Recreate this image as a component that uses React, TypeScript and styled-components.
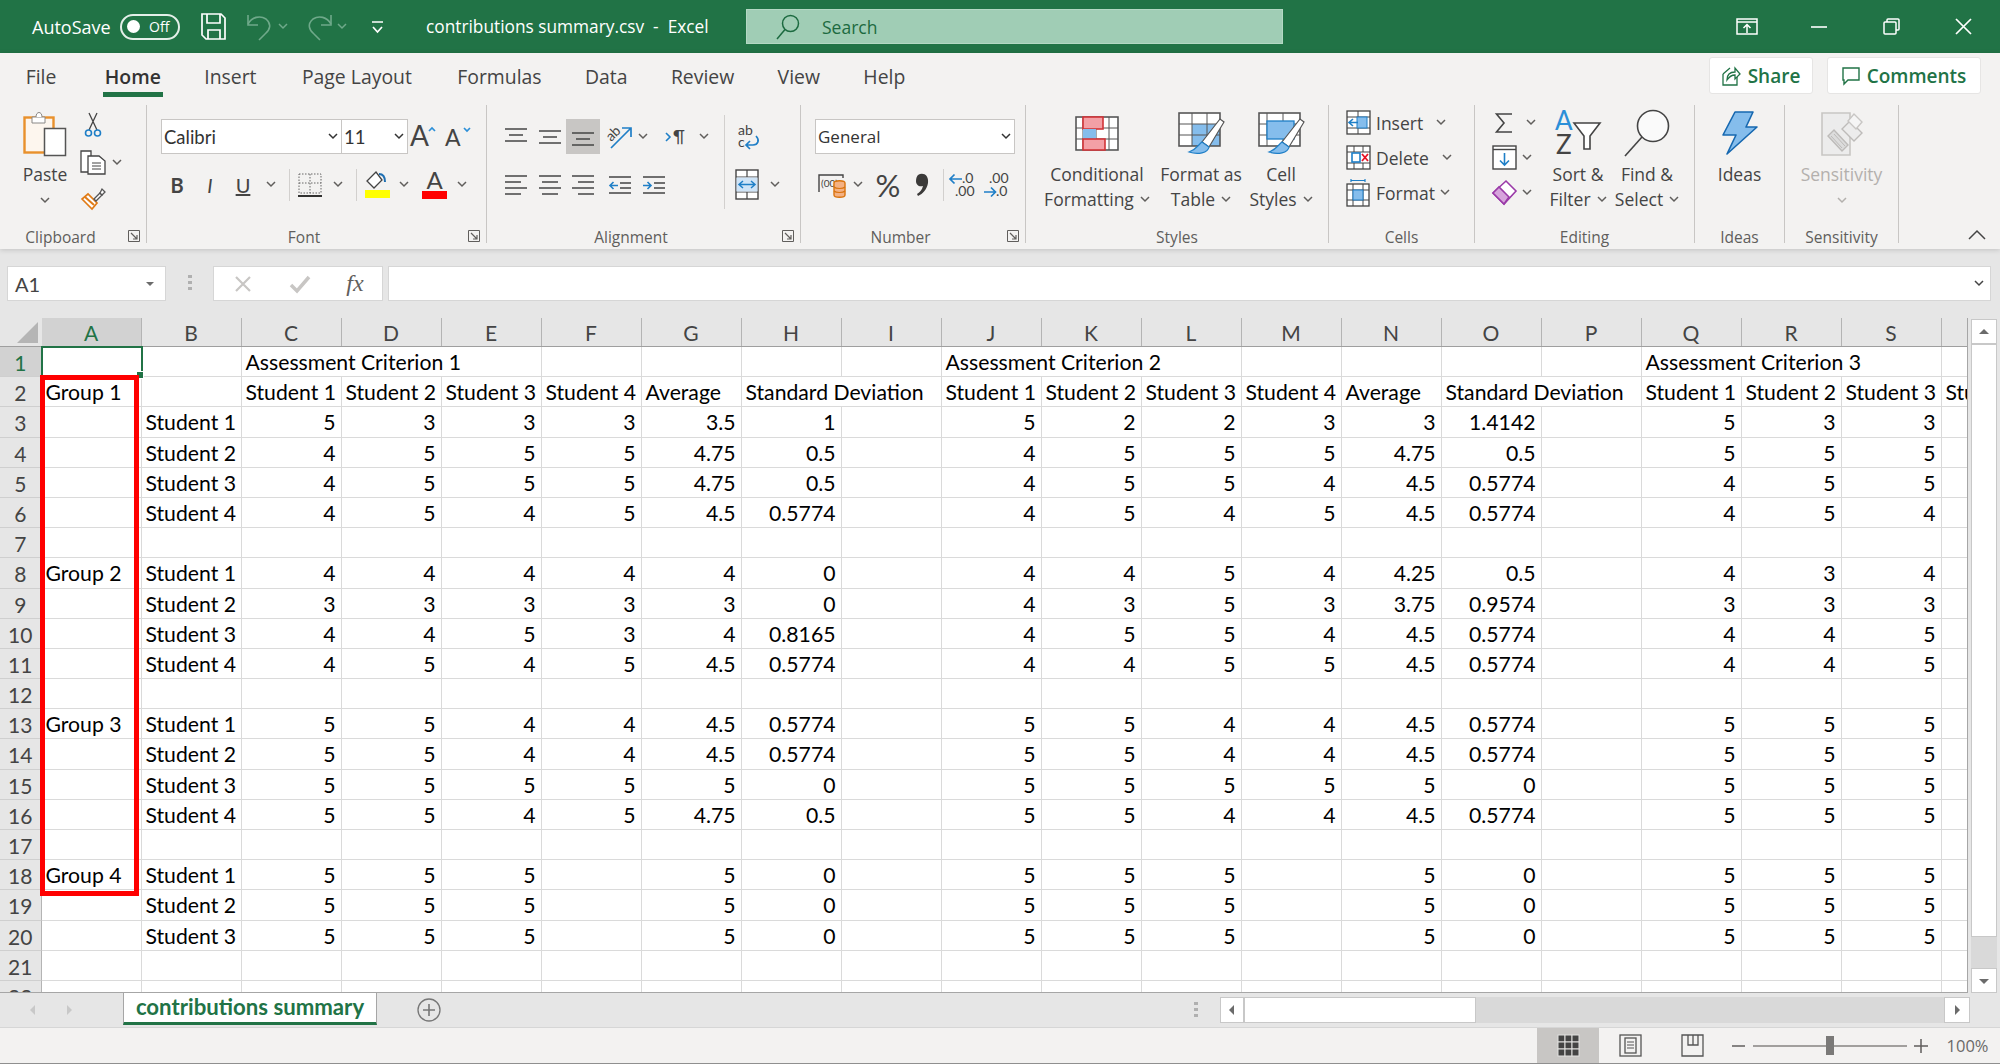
import React from "react";
import styled, { createGlobalStyle } from "styled-components";

const UI = `"Open Sans", "Noto Sans", sans-serif`;
const CELL = `Lato, "Open Sans", sans-serif`;
const GREEN = "#217346";
const INK = "#444444";
const BLUE = "#2b8fd8";
const LIGHTBLUE = "#85bdec";

const GlobalStyle = createGlobalStyle`
  html, body { margin: 0; padding: 0; background: #e6e6e6; }
  * { box-sizing: border-box; }
  svg { overflow: visible; }
`;

const Page = styled.div`
  width: 2000px;
  height: 1064px;
  overflow: hidden;
  display: flex;
  flex-direction: column;
  background: #e6e6e6;
  font-family: ${UI};
  color: #3b3a39;
`;

/* title bar */
const TitleBar = styled.header`
  height: 53px;
  flex: none;
  display: flex;
  align-items: center;
  padding-left: 32px;
  background: ${GREEN};
  color: #fff;
`;
const AutoSave = styled.span`
  width: 88px;
  font-size: 18px;
`;
const Toggle = styled.span`
  width: 60px;
  height: 26px;
  border: 2px solid #e4efe9;
  border-radius: 13px;
  display: flex;
  align-items: center;
  gap: 9px;
  padding-left: 5px;
  font-size: 14px;
  &::before {
    content: "";
    width: 13px;
    height: 13px;
    border-radius: 50%;
    background: #fff;
  }
`;
const Slot = styled.span<{ $w: number; $ml?: number }>`
  width: ${(p) => p.$w}px;
  margin-left: ${(p) => p.$ml || 0}px;
  flex: none;
  display: inline-flex;
  align-items: center;
  justify-content: center;
`;
const FileName = styled.span`
  width: 320px;
  margin-left: 23px;
  font-size: 17.3px;
  white-space: pre;
`;
const SearchBox = styled.div`
  width: 537px;
  height: 35px;
  display: flex;
  align-items: center;
  gap: 22px;
  padding-left: 29px;
  background: #a0cdb5;
  border: 1px solid #b4d8c4;
  color: #1c6a40;
  font-size: 17.5px;
`;
const WindowControls = styled.div`
  margin-left: auto;
  margin-right: 1px;
  display: flex;
`;

/* ribbon */
const Ribbon = styled.section`
  flex: none;
  height: 196px;
  background: #f3f2f1;
  box-shadow: 0 1px 5px rgba(0, 0, 0, 0.16);
  position: relative;
  display: flex;
  flex-direction: column;
`;
const TabRow = styled.nav`
  height: 47px;
  flex: none;
  display: flex;
  padding: 0 19px 0 4px;
`;
const Tab = styled.span<{ $active?: boolean; $mr?: number }>`
  height: 44px;
  margin-right: ${(p) => p.$mr || 0}px;
  padding: 5px 21.7px 0;
  font-size: 19.4px;
  line-height: 38px;
  font-weight: ${(p) => (p.$active ? 600 : 400)};
  color: ${(p) => (p.$active ? "#333" : "#444")};
  position: relative;
  &::after {
    content: "";
    display: ${(p) => (p.$active ? "block" : "none")};
    position: absolute;
    left: 20px;
    right: 20px;
    bottom: 0;
    height: 5px;
    background: ${GREEN};
  }
`;
const TabActions = styled.div`
  margin-left: auto;
  padding-top: 4px;
  display: flex;
  gap: 14px;
`;
const TabAction = styled.button<{ $w: number }>`
  width: ${(p) => p.$w}px;
  height: 37px;
  display: flex;
  align-items: center;
  justify-content: center;
  gap: 7px;
  background: #fff;
  border: 1px solid #e6e5e4;
  border-radius: 3px;
  color: ${GREEN};
  font-family: ${UI};
  font-size: 19px;
  font-weight: 600;
`;
const Groups = styled.div`
  height: 138px;
  margin-top: 5px;
  display: flex;
`;
const Group = styled.div<{ $w: number }>`
  width: ${(p) => p.$w}px;
  flex: none;
  height: 100%;
  border-right: 1px solid #c8c6c4;
  display: flex;
  flex-direction: column;
`;
const GroupBody = styled.div`
  height: 121px;
  flex: none;
  display: flex;
`;
const GroupLabel = styled.div`
  height: 17px;
  line-height: 22px;
  display: flex;
  font-size: 15.5px;
  color: #605e5c;
`;
const GroupName = styled.span`
  flex: 1;
  text-align: center;
`;
const Launcher = styled.span`
  width: 25px;
  display: flex;
  justify-content: center;
  padding-top: 4px;
`;
const Stack = styled.div<{ $pl?: number; $w?: number }>`
  padding: 14px 0 0 ${(p) => p.$pl || 0}px;
  ${(p) => (p.$w ? `width: ${p.$w}px;` : "")}
  flex: none;
  display: flex;
  flex-direction: column;
  gap: 13px;
`;
const ToolRow = styled.div<{ $h?: number }>`
  height: ${(p) => p.$h || 35}px;
  display: flex;
  align-items: center;
`;
const Field = styled.div<{ $w: number; $font?: string; $size?: number }>`
  width: ${(p) => p.$w}px;
  height: 35px;
  margin-right: -1px;
  display: flex;
  align-items: center;
  justify-content: space-between;
  padding: 0 3px 0 2px;
  background: #fff;
  border: 1px solid #c8c6c4;
  font-family: ${(p) => p.$font || CELL};
  font-size: ${(p) => p.$size || 18.5}px;
  color: #333;
`;
const Glyph = styled.span<{ $bold?: boolean; $italic?: boolean; $under?: boolean; $size?: number }>`
  font-family: ${CELL};
  font-size: ${(p) => p.$size || 19}px;
  font-weight: ${(p) => (p.$bold ? 700 : 400)};
  font-style: ${(p) => (p.$italic ? "italic" : "normal")};
  text-decoration: ${(p) => (p.$under ? "underline" : "none")};
  color: ${INK};
`;
const FxGlyph = styled.span`
  font-family: "Liberation Serif", serif;
  font-style: italic;
  font-size: 24px;
  color: #605e5c;
`;
const Pressed = styled(Slot)`
  height: 35px;
  background: #c8c6c4;
`;
const Divider = styled.span<{ $h: number }>`
  width: 1px;
  height: ${(p) => p.$h}px;
  background: #d2d0ce;
`;
const InnerDivider = styled.span`
  width: 1px;
  height: 94px;
  margin-top: 10px;
  flex: none;
  background: #d2d0ce;
`;
const BigButton = styled.div<{ $w?: number; $off?: boolean }>`
  ${(p) => (p.$w ? `width: ${p.$w}px; flex: none;` : "flex: 1;")}
  padding-top: 5px;
  display: flex;
  flex-direction: column;
  align-items: center;
  font-size: 17.5px;
  line-height: 25px;
  color: ${(p) => (p.$off ? "#b3b0ad" : "#444")};
`;
const BigIcon = styled.span`
  height: 46px;
  margin-bottom: 6px;
  display: flex;
  align-items: center;
`;
const BigLine = styled.span<{ $drop?: boolean }>`
  display: flex;
  align-items: center;
  gap: 6px;
  white-space: nowrap;
  ${(p) => (p.$drop ? "height: 25px; padding-top: 2px;" : "")}
`;
const ClipColumn = styled.div`
  width: 76px;
  padding-left: 14px;
  flex: none;
  display: flex;
`;
const ClipSide = styled.div`
  padding-top: 7px;
  display: flex;
  flex-direction: column;
  align-items: flex-start;
  gap: 12px;
`;
const SmallRows = styled.div<{ $pl: number; $w?: number }>`
  padding-left: ${(p) => p.$pl}px;
  ${(p) => (p.$w ? `width: ${p.$w}px; flex: none;` : "")}
  display: flex;
  flex-direction: column;
`;
const SmallRow = styled.div`
  height: 35px;
  display: flex;
  align-items: center;
  font-size: 17.5px;
  color: #444;
`;
const SmallText = styled.span<{ $w: number }>`
  width: ${(p) => p.$w}px;
  margin-left: 3px;
  flex: none;
`;
const CollapseCell = styled.div`
  flex: 1;
  display: flex;
  justify-content: flex-end;
  align-items: flex-end;
  padding: 0 14px 3px 0;
`;

/* formula bar */
const FormulaRow = styled.div`
  height: 69px;
  flex: none;
  display: flex;
  align-items: flex-start;
  padding: 17px 9px 0 7px;
`;
const NameBox = styled.div`
  width: 159px;
  height: 35px;
  display: flex;
  align-items: center;
  justify-content: space-between;
  padding: 0 8px 0 7px;
  background: #fff;
  border: 1px solid #d6d6d6;
  font-family: ${CELL};
  font-size: 20px;
  color: #444;
`;
const FormulaGrip = styled(Slot)`
  height: 33px;
`;
const FormulaActions = styled.div`
  width: 170px;
  height: 35px;
  display: flex;
  background: #fff;
  border: 1px solid #d6d6d6;
`;
const FormulaInput = styled.div`
  flex: 1;
  margin-left: 5px;
  height: 35px;
  display: flex;
  align-items: center;
  justify-content: flex-end;
  padding-right: 6px;
  background: #fff;
  border: 1px solid #d6d6d6;
`;

/* sheet */
const SheetArea = styled.div`
  height: 675px;
  flex: none;
  display: flex;
`;
const Sheet = styled.div`
  width: 1968px;
  flex: none;
  overflow: hidden;
  display: flex;
  flex-direction: column;
  border-right: 1px solid #a6a6a6;
  border-bottom: 1px solid #a6a6a6;
`;
const HeaderRow = styled.div`
  height: 29px;
  flex: none;
  display: flex;
  border-bottom: 1px solid #9f9f9f;
`;
const Corner = styled.div`
  width: 41.5px;
  flex: none;
  display: flex;
  align-items: flex-end;
  justify-content: flex-end;
  padding: 0 4px 3px 0;
`;
const ColHead = styled.div<{ $active?: boolean }>`
  width: 100px;
  flex: none;
  text-align: center;
  font-family: ${CELL};
  font-size: 21px;
  line-height: 30px;
  background: ${(p) => (p.$active ? "#d2d2d2" : "#e6e6e6")};
  color: ${(p) => (p.$active ? GREEN : "#444")};
  border-right: 1px solid #b4b4b4;
`;
const SheetBody = styled.div`
  position: relative;
  background: #fff;
  flex: 1;
`;
const SheetRow = styled.div`
  height: 30.2px;
  display: flex;
`;
const RowHead = styled.div<{ $active?: boolean }>`
  width: 41.5px;
  flex: none;
  text-align: center;
  font-family: ${CELL};
  font-size: 21px;
  line-height: 31px;
  background: ${(p) => (p.$active ? "#d2d2d2" : "#e6e6e6")};
  color: ${(p) => (p.$active ? GREEN : "#444")};
  border-right: 1px solid #b4b4b4;
  border-bottom: 1px solid #cfcfcf;
`;
const Cell = styled.div<{ $span?: number; $num?: boolean }>`
  width: ${(p) => (p.$span || 1) * 100}px;
  flex: none;
  padding: 0 5px 0 4px;
  text-align: ${(p) => (p.$num ? "right" : "left")};
  font-family: ${CELL};
  font-size: 21.2px;
  line-height: 31px;
  color: #000;
  white-space: nowrap;
  border-right: 1px solid #dadada;
  border-bottom: 1px solid #dadada;
`;
const ActiveCell = styled(Cell)`
  position: relative;
  outline: 2px solid ${GREEN};
  outline-offset: -1px;
  &::after {
    content: "";
    position: absolute;
    right: -3px;
    bottom: -3px;
    width: 6px;
    height: 6px;
    background: ${GREEN};
    border: 1px solid #fff;
  }
`;
const Highlight = styled.div`
  position: absolute;
  left: 40px;
  top: 28px;
  width: 99px;
  height: 521px;
  border: 5px solid #ff0000;
  pointer-events: none;
`;
const VScroll = styled.div`
  width: 26px;
  margin-left: 3px;
  flex: none;
  display: flex;
  flex-direction: column;
  padding-top: 1px;
  background: #e6e6e6;
`;
const ScrollButton = styled.div<{ $w?: number; $h?: number }>`
  width: ${(p) => p.$w || 26}px;
  height: ${(p) => p.$h || 25}px;
  flex: none;
  display: flex;
  align-items: center;
  justify-content: center;
  background: #fff;
  border: 1px solid #c8c8c8;
`;
const VThumb = styled.div`
  height: 593px;
  flex: none;
  background: #fff;
  border: 1px solid #c8c8c8;
`;
const VTrack = styled.div`
  flex: 1;
  background: #d9d9d9;
`;

/* sheet tabs */
const TabStrip = styled.div`
  height: 35px;
  flex: none;
  display: flex;
  align-items: flex-start;
  border-bottom: 1px solid #d6d6d6;
  padding-right: 30px;
`;
const SheetNav = styled.div`
  width: 123px;
  height: 34px;
  flex: none;
  display: flex;
  align-items: center;
  padding-left: 15px;
`;
const SheetTab = styled.div`
  width: 254px;
  height: 32px;
  flex: none;
  background: #fff;
  border: 1px solid #a6a6a6;
  border-top: none;
  border-bottom: 3px solid ${GREEN};
  text-align: center;
  font-family: ${CELL};
  font-size: 22.2px;
  font-weight: 700;
  line-height: 27px;
  color: ${GREEN};
`;
const AddSheet = styled(Slot)`
  height: 34px;
`;
const HScroll = styled.div`
  margin-left: auto;
  height: 26px;
  margin-top: 4px;
  display: flex;
`;
const HThumb = styled.div`
  width: 232px;
  background: #fff;
  border: 1px solid #c8c8c8;
`;
const HTrack = styled.div`
  width: 468px;
  background: #d9d9d9;
`;

/* status bar */
const StatusBar = styled.footer`
  height: 36px;
  flex: none;
  display: flex;
  justify-content: flex-end;
  background: #f3f2f1;
  border-bottom: 1px solid #8f8f8f;
`;
const ViewButton = styled.span<{ $active?: boolean }>`
  width: 62px;
  display: flex;
  align-items: center;
  justify-content: center;
  background: ${(p) => (p.$active ? "#c8c6c4" : "transparent")};
`;
const ZoomSign = styled.span<{ $w: number }>`
  width: ${(p) => p.$w}px;
  display: flex;
  align-items: center;
  justify-content: center;
`;
const ZoomSlider = styled.span`
  width: 154px;
  display: flex;
  align-items: center;
  justify-content: center;
  background: linear-gradient(#a19f9d, #a19f9d) center / 100% 2px no-repeat;
  &::before {
    content: "";
    width: 8px;
    height: 19px;
    background: #7a7978;
  }
`;
const ZoomValue = styled.span`
  width: 65px;
  text-align: center;
  font-size: 16.5px;
  line-height: 35px;
  color: #6b6a69;
`;

/* drawn icons */
const Chev = ({ c = "#605e5c" }: { c?: string }) => (
  <svg width="10" height="7" viewBox="0 0 10 7">
    <path d="M1 1l4 4 4-4" fill="none" stroke={c} strokeWidth="1.5" />
  </svg>
);

const SaveIcon = () => (
  <svg width="25" height="27" viewBox="0 0 25 27" fill="none" stroke="#fff" strokeWidth="1.7">
    <path d="M1 1h19l4 4v21H5l-4-4z" />
    <path d="M6 1v9h13V1M7 26v-9h12v9" />
  </svg>
);
const UndoIcon = ({ flip }: { flip?: boolean }) => (
  <svg width="26" height="30" viewBox="0 0 26 30" fill="none" stroke="#6fa98a" strokeWidth="1.6">
    <g transform={flip ? "matrix(-1 0 0 1 26 0)" : undefined}>
      <path d="M2 3v10h10" />
      <path d="M2 12C6 5 14 3 20 7c6 5 4 11-1 15l-6 6" />
    </g>
  </svg>
);
const CustomizeIcon = () => (
  <svg width="13" height="14" viewBox="0 0 13 14" fill="none" stroke="#fff" strokeWidth="1.7">
    <path d="M1 2h11M2 7l4.5 5L11 7" />
  </svg>
);
const SearchGlass = () => (
  <svg width="24" height="26" viewBox="0 0 24 26" fill="none" stroke="#1c6a40" strokeWidth="1.5">
    <circle cx="14.5" cy="9.5" r="8" />
    <path d="M9 15.5L1 25" />
  </svg>
);
const RibbonDisplayIcon = () => (
  <svg width="22" height="17" viewBox="0 0 22 17" fill="none" stroke="#fff" strokeWidth="1.5">
    <rect x="1" y="1" width="20" height="15" />
    <path d="M1 4h20" />
    <path d="M11 15V7M7.5 10L11 6.5l3.5 3.5" />
  </svg>
);
const MinIcon = () => (
  <svg width="18" height="17" viewBox="0 0 18 17" stroke="#fff" strokeWidth="1.6">
    <path d="M1 9h16" />
  </svg>
);
const RestoreIcon = () => (
  <svg width="17" height="17" viewBox="0 0 17 17" fill="none" stroke="#fff" strokeWidth="1.5">
    <rect x="1" y="4" width="12" height="12" rx="1" />
    <path d="M4 4V2a1 1 0 0 1 1-1h10a1 1 0 0 1 1 1v9a1 1 0 0 1-1 1h-2" />
  </svg>
);
const CloseIcon = () => (
  <svg width="17" height="17" viewBox="0 0 17 17" stroke="#fff" strokeWidth="1.7">
    <path d="M1 1l15 15M16 1L1 16" />
  </svg>
);
const ShareIcon = () => (
  <svg width="19" height="20" viewBox="0 0 19 20" fill="none" stroke={GREEN} strokeWidth="1.3">
    <path d="M1 8v11h14v-8" />
    <path d="M1 8l7-6M5 14c0-5 3-8 8-8V2l5 6-5 5V9c-4 0-6 2-8 5z" />
  </svg>
);
const CommentIcon = () => (
  <svg width="18" height="18" viewBox="0 0 18 18" fill="none" stroke={GREEN} strokeWidth="1.4">
    <path d="M1 1h16v12H6l-4 4v-4H1z" />
  </svg>
);

const PasteIcon = () => (
  <svg width="44" height="47" viewBox="0 0 44 47">
    <rect x="1.5" y="7.5" width="29" height="35" fill="#fdf6ee" stroke="#e8912c" strokeWidth="2.4" />
    <path d="M9 7h13v6H9z" fill="#fff" stroke="#8a8886" />
    <path d="M13 7c0-6 6-6 6 0" fill="#fff" stroke="#8a8886" />
    <rect x="21.5" y="18.5" width="21" height="27" fill="#fff" stroke="#555" strokeWidth="1.5" />
  </svg>
);
const CutIcon = () => (
  <svg width="18" height="26" viewBox="0 0 18 26" fill="none">
    <path d="M13 1L5 18M5 1l8 17" stroke={INK} strokeWidth="1.3" />
    <circle cx="4.5" cy="21" r="3" stroke="#1f7fc7" strokeWidth="1.6" />
    <circle cx="13.5" cy="21" r="3" stroke="#1f7fc7" strokeWidth="1.6" />
  </svg>
);
const CopyIcon = () => (
  <svg width="26" height="25" viewBox="0 0 26 25" fill="#fff" stroke={INK} strokeWidth="1.3">
    <path d="M1 1h10v21H1z" />
    <path d="M8 6h11l6 5v13H8z" />
    <path d="M12 13h9M12 16h9M12 19h9" strokeWidth="1" />
  </svg>
);
const PainterIcon = () => (
  <svg width="25" height="24" viewBox="0 0 25 24">
    <path d="M1 12l10 10 5-6-9-9z" fill="#fff" stroke="#e07b16" strokeWidth="1.7" />
    <path d="M4 10l9 8" stroke="#e07b16" strokeWidth="2" />
    <path d="M13 12l6-6 2 2-6 6z" fill="#fff" stroke="#555" strokeWidth="1.3" />
    <path d="M19 6l2-4 3 3-3 3z" fill="#fff" stroke="#555" strokeWidth="1.3" />
  </svg>
);
const FontStep = ({ up, size }: { up?: boolean; size: number }) => (
  <svg width="28" height="24" viewBox="0 0 28 24">
    <text x="0" y="21" fontFamily="Lato" fontSize={size} fill={INK}>A</text>
    <path d={up ? "M19 6l3-3 3 3" : "M19 3l3 3 3-3"} fill="none" stroke={BLUE} strokeWidth="1.7" />
  </svg>
);
const BorderIcon = () => (
  <svg width="24" height="24" viewBox="0 0 24 24" fill="none" stroke="#666" strokeWidth="1" strokeDasharray="1.5 1.5">
    <rect x="1" y="1" width="22" height="19" />
    <path d="M12 1v19M1 10h22" />
    <path d="M0 23h24" stroke="#000" strokeWidth="1.6" strokeDasharray="none" />
  </svg>
);
const FillIcon = () => (
  <svg width="25" height="27" viewBox="0 0 25 27">
    <path d="M11 1l-9 9 7 7 8-8z" fill="#fff" stroke={INK} strokeWidth="1.3" />
    <path d="M14 3c4 0 6 3 6 8" fill="none" stroke="#1f6fb2" strokeWidth="2" />
    <rect x="0" y="19" width="25" height="8" fill="#ffff00" />
  </svg>
);
const ColorIcon = () => (
  <svg width="25" height="29" viewBox="0 0 25 29">
    <text x="12.5" y="19" textAnchor="middle" fontFamily="Lato" fontSize="24" fill={INK}>A</text>
    <rect x="0" y="21" width="25" height="8" fill="#ff0000" />
  </svg>
);
const LinesIcon = ({ lines }: { lines: number[][] }) => (
  <svg width="24" height="24" viewBox="0 0 24 24" stroke={INK} strokeWidth="1.5">
    {lines.map(([y, a, b], i) => (
      <path key={i} d={`M${a} ${y}H${b}`} />
    ))}
  </svg>
);
const IndentIcon = ({ out }: { out?: boolean }) => (
  <svg width="24" height="24" viewBox="0 0 24 24" fill="none">
    <path d="M1 4h22M12 10h11M12 15h11M1 20h22" stroke={INK} strokeWidth="1.4" />
    <path d={out ? "M10 12.5H2M5.5 9l-3.5 3.5L5.5 16" : "M1 12.5h8M5.5 9L9 12.5 5.5 16"} stroke="#1f7fc7" strokeWidth="1.6" />
  </svg>
);
const OrientationIcon = () => (
  <svg width="28" height="28" viewBox="0 0 28 28" fill="none">
    <text x="1" y="15" fontFamily="Lato" fontSize="14" fill={INK} transform="rotate(-45 8 12)">ab</text>
    <path d="M5 25L25 5M16 5h9v9" stroke="#1f7fc7" strokeWidth="1.7" />
  </svg>
);
const ParagraphIcon = () => (
  <svg width="22" height="20" viewBox="0 0 22 20" fill="none">
    <path d="M1 6l4 4-4 4" stroke="#1f7fc7" strokeWidth="1.6" />
    <text x="8" y="16" fontFamily="Lato" fontSize="17" fill={INK}>¶</text>
  </svg>
);
const WrapIcon = () => (
  <svg width="24" height="24" viewBox="0 0 24 24" fill="none">
    <text x="1" y="10" fontFamily="Lato" fontSize="14" fill={INK}>ab</text>
    <text x="1" y="22" fontFamily="Lato" fontSize="14" fill={INK}>c</text>
    <path d="M19 11c4 4 2 9-3 9h-6M13 16l-4 4 4 4" stroke="#1f7fc7" strokeWidth="1.7" />
  </svg>
);
const MergeIcon = () => (
  <svg width="24" height="31" viewBox="0 0 24 31" fill="none">
    <rect x="1" y="1" width="22" height="29" fill="#fff" stroke={INK} strokeWidth="1.4" />
    <path d="M1 8h22M1 23h22M12 1v7M12 23v7" stroke={INK} strokeWidth="1.2" />
    <rect x="1.5" y="8.5" width="21" height="14" fill="#cfe4f7" />
    <path d="M4 15.5h16M8 12l-4 3.5L8 19M16 12l4 3.5-4 3.5" stroke="#1f7fc7" strokeWidth="1.5" />
  </svg>
);
const AccountingIcon = () => (
  <svg width="28" height="26" viewBox="0 0 28 26" fill="none">
    <path d="M1 20V3h24v3" stroke={INK} strokeWidth="1.4" />
    <text x="3" y="15" fontFamily="Lato" fontSize="10" fill={INK}>(00)</text>
    <path d="M16 11c0-3 11-3 11 0v12c0 3-11 3-11 0z" fill="#f4b183" stroke="#d9730d" strokeWidth="1.4" />
    <path d="M16 15c2 2 9 2 11 0M16 19c2 2 9 2 11 0" stroke="#d9730d" strokeWidth="1.2" />
  </svg>
);
const CommaIcon = () => (
  <svg width="14" height="24" viewBox="0 0 14 24">
    <path d="M3 2c5-3 11 0 10 8-1 6-5 11-10 13l-1-2c3-2 5-4 6-8-4 1-7-1-7-5 0-3 1-5 2-6z" fill="#3b3a39" />
  </svg>
);
const DecimalIcon = ({ more }: { more?: boolean }) => (
  <svg width="28" height="26" viewBox="0 0 28 26" fill="none">
    <text x={more ? 13 : 6} y="11" fontFamily="Lato" fontSize="14" fill={INK}>{more ? ".0" : ".00"}</text>
    <text x={more ? 6 : 13} y="24" fontFamily="Lato" fontSize="14" fill={INK}>{more ? ".00" : ".0"}</text>
    {more ? (
      <path d="M13 7H1M5.5 2.5L1 7l4.5 4.5" stroke="#1f7fc7" strokeWidth="1.7" />
    ) : (
      <path d="M1 20h11M8 15.5l4.5 4.5L8 24.5" stroke="#1f7fc7" strokeWidth="1.7" />
    )}
  </svg>
);
const Brush = () => (
  <g>
    <path d="M24 30L42 7l4 3-15 25z" fill="#fff" stroke="#555" strokeWidth="1.2" />
    <path d="M24 30c-4 3-5 7-13 10 9 3 19 1 20-5z" fill="#85bdec" stroke="#1f7fc7" strokeWidth="1.2" />
  </g>
);
const CondFormatIcon = () => (
  <svg width="44" height="35" viewBox="0 0 44 35">
    <rect width="44" height="35" fill="#fff" />
    <g stroke="#555" strokeWidth="1.6" fill="none">
      <rect x="1" y="1" width="42" height="33" />
      <path d="M1 12h42M1 23h42M8 1v33M21 1v33M34 1v33" strokeWidth="1" />
    </g>
    <rect x="8" y="1" width="20" height="12" fill="#f3a0a6" stroke="#d13438" strokeWidth="1.6" />
    <rect x="8" y="13" width="13" height="10" fill={LIGHTBLUE} />
    <rect x="8" y="23" width="22" height="11" fill="#f3a0a6" stroke="#d13438" strokeWidth="1.6" />
  </svg>
);
const TableIcon = () => (
  <svg width="46" height="42" viewBox="0 0 46 42">
    <rect width="43" height="35" fill="#fff" />
    <rect x="14" y="12" width="28" height="22" fill={LIGHTBLUE} />
    <g stroke="#555" strokeWidth="1.6" fill="none">
      <rect x="1" y="1" width="41" height="33" />
      <path d="M1 12h41M1 23h41M14 1v33M29 1v33" strokeWidth="1" />
    </g>
    <Brush />
  </svg>
);
const CellStyleIcon = () => (
  <svg width="46" height="42" viewBox="0 0 46 42">
    <rect width="43" height="35" fill="#fff" />
    <path d="M1 12h41M1 23h41M9 1v33M25 1v33" stroke="#555" fill="none" />
    <rect x="9" y="9" width="27" height="18" fill={LIGHTBLUE} stroke="#1f7fc7" strokeWidth="1.3" />
    <rect x="1" y="1" width="41" height="33" fill="none" stroke="#555" strokeWidth="1.6" />
    <Brush />
  </svg>
);
const InsertIcon = () => (
  <svg width="25" height="25" viewBox="0 0 25 25" fill="none">
    <rect x="1" y="1" width="23" height="23" fill="#fff" stroke={INK} strokeWidth="1.3" />
    <path d="M1 7h23M1 18h23M12 1v6M12 18v6" stroke={INK} />
    <rect x="11" y="7" width="10" height="11" fill={LIGHTBLUE} stroke="#1f7fc7" />
    <path d="M12 12.5H3M7 9l-4 3.5L7 16" stroke="#1f7fc7" strokeWidth="1.6" />
  </svg>
);
const DeleteIcon = () => (
  <svg width="25" height="25" viewBox="0 0 25 25" fill="none">
    <rect x="1" y="1" width="23" height="23" fill="#fff" stroke={INK} strokeWidth="1.3" />
    <path d="M1 7h23M1 18h23M8 1v6M17 1v6M8 18v6M17 18v6" stroke={INK} />
    <rect x="6" y="8" width="8" height="9" fill="#fff" stroke="#1f7fc7" strokeWidth="1.6" />
    <path d="M16 9l6 7M22 9l-6 7" stroke="#e81123" strokeWidth="1.8" />
  </svg>
);
const FormatCellIcon = () => (
  <svg width="24" height="28" viewBox="0 0 24 28" fill="none">
    <path d="M5 1.5h14M5 0v3M19 0v3" stroke="#1f7fc7" strokeWidth="1.2" />
    <rect x="1" y="5" width="22" height="22" fill="#fff" stroke={INK} strokeWidth="1.3" />
    <path d="M1 11h22M1 21h22M7 5v22M17 5v22" stroke={INK} />
    <rect x="7" y="11" width="10" height="10" fill={LIGHTBLUE} stroke="#1f7fc7" />
  </svg>
);
const SigmaIcon = () => (
  <svg width="18" height="22" viewBox="0 0 18 22" fill="none" stroke={INK} strokeWidth="1.6">
    <path d="M17 2H1.5L9 11l-7.5 9H17" />
  </svg>
);
const FillDownIcon = () => (
  <svg width="25" height="25" viewBox="0 0 25 25" fill="#fff">
    <rect x="1" y="1" width="23" height="23" stroke={INK} strokeWidth="1.4" />
    <path d="M1 4.5h23" stroke={INK} strokeWidth="1.4" />
    <path d="M12.5 8v12M8 15.5l4.5 4.5 4.5-4.5" fill="none" stroke="#1f7fc7" strokeWidth="1.6" />
  </svg>
);
const EraserIcon = () => (
  <svg width="25" height="25" viewBox="0 0 25 25" fill="none">
    <path d="M1 13L14 1l10 10-12 13z" fill="#fff" stroke="#9a3aa8" strokeWidth="1.6" />
    <path d="M1 13l6-6 10 10-5 7z" fill="#d6a4dc" stroke="#9a3aa8" strokeWidth="1.6" />
  </svg>
);
const SortIcon = () => (
  <svg width="46" height="46" viewBox="0 0 46 46" fill="none">
    <text x="0" y="20" fontFamily="Lato" fontSize="26" fill="#2b8fd8">A</text>
    <text x="1" y="44" fontFamily="Lato" fontSize="26" fill={INK}>Z</text>
    <path d="M19 13h26l-10 13v13h-6V26z" fill="#fff" stroke={INK} strokeWidth="1.6" />
  </svg>
);
const FindIcon = () => (
  <svg width="46" height="48" viewBox="0 0 46 48" fill="none">
    <circle cx="29" cy="17" r="15.5" fill="#fafafa" stroke={INK} strokeWidth="1.6" />
    <path d="M18 28L1 47" stroke={INK} strokeWidth="1.6" />
  </svg>
);
const IdeasIcon = () => (
  <svg width="36" height="44" viewBox="0 0 36 44">
    <path d="M13 1h18l-7 15h11L5 43l9-19H1z" fill={LIGHTBLUE} stroke="#1668b0" strokeWidth="1.6" strokeLinejoin="round" />
  </svg>
);
const SensitivityIcon = () => (
  <svg width="44" height="48" viewBox="0 0 44 48" fill="none">
    <path d="M2 4h28v42H2z" fill="#ececec" stroke="#c8c6c4" strokeWidth="1.6" />
    <path d="M8 27l14 15 6-6-14-15z" fill="#dcdcdc" stroke="#bdbbb9" strokeWidth="1.4" />
    <path d="M11 27l11 12M14 25l11 12" stroke="#bdbbb9" />
    <path d="M22 20l8-8 12 12-8 8z" fill="#ececec" stroke="#bdbbb9" strokeWidth="1.4" />
    <path d="M28 12l6-7 8 8-6 7z" fill="#f5f5f5" stroke="#c8c6c4" strokeWidth="1.4" />
  </svg>
);
const LauncherIcon = () => (
  <svg width="12" height="12" viewBox="0 0 12 12" fill="none" stroke="#605e5c">
    <path d="M.5 11.5V.5h11v11z" />
    <path d="M3 3l6 6M9 5v4H5" strokeWidth="1.2" />
  </svg>
);
const CornerMark = () => (
  <svg width="21" height="21" viewBox="0 0 21 21">
    <path d="M21 0v21H0z" fill="#b5b5b5" />
  </svg>
);
const Triangle = ({ d, c = "#6b6b6b" }: { d: string; c?: string }) => (
  <svg width="14" height="14" viewBox="0 0 14 14">
    <path d={d} fill={c} />
  </svg>
);
const DotsIcon = () => (
  <svg width="4" height="16" viewBox="0 0 4 16" fill="#b0b0b0">
    <rect y="0" width="4" height="3" />
    <rect y="6" width="4" height="3" />
    <rect y="12" width="4" height="3" />
  </svg>
);
const PlusCircle = () => (
  <svg width="24" height="24" viewBox="0 0 24 24" fill="none" stroke="#777" strokeWidth="1.3">
    <circle cx="12" cy="12" r="11" />
    <path d="M12 6v12M6 12h12" strokeWidth="1.6" />
  </svg>
);
const NormalViewIcon = () => (
  <svg width="21" height="21" viewBox="0 0 21 21" fill="#444" stroke="#e0dfde">
    {[0, 7, 14].map((y) =>
      [0, 7, 14].map((x) => <rect key={x + "-" + y} x={x} y={y} width="7" height="7" />)
    )}
  </svg>
);
const PageViewIcon = () => (
  <svg width="23" height="23" viewBox="0 0 23 23" fill="none" stroke="#555" strokeWidth="1.3">
    <rect x="1" y="1" width="21" height="21" />
    <rect x="6" y="4" width="11" height="15" />
    <path d="M8 8h7M8 11h7M8 14h7" strokeWidth="1" />
  </svg>
);
const BreakViewIcon = () => (
  <svg width="23" height="23" viewBox="0 0 23 23" fill="none" stroke="#555" strokeWidth="1.3">
    <path d="M1 1h21v21H1zM7 1v10h5V1M12 11h5V1" />
  </svg>
);

/* sheet data */
const COLS = "ABCDEFGHIJKLMNOPQRST".split("");

// each row: label in A, label in B, then C-H, J-O, Q-S
const ROWS: [string, string, string][] = [
  ["", "Student 1", "5 3 3 3 3.5 1|5 2 2 3 3 1.4142|5 3 3"],
  ["", "Student 2", "4 5 5 5 4.75 0.5|4 5 5 5 4.75 0.5|5 5 5"],
  ["", "Student 3", "4 5 5 5 4.75 0.5|4 5 5 4 4.5 0.5774|4 5 5"],
  ["", "Student 4", "4 5 4 5 4.5 0.5774|4 5 4 5 4.5 0.5774|4 5 4"],
  ["", "", ""],
  ["Group 2", "Student 1", "4 4 4 4 4 0|4 4 5 4 4.25 0.5|4 3 4"],
  ["", "Student 2", "3 3 3 3 3 0|4 3 5 3 3.75 0.9574|3 3 3"],
  ["", "Student 3", "4 4 5 3 4 0.8165|4 5 5 4 4.5 0.5774|4 4 5"],
  ["", "Student 4", "4 5 4 5 4.5 0.5774|4 4 5 5 4.5 0.5774|4 4 5"],
  ["", "", ""],
  ["Group 3", "Student 1", "5 5 4 4 4.5 0.5774|5 5 4 4 4.5 0.5774|5 5 5"],
  ["", "Student 2", "5 5 4 4 4.5 0.5774|5 5 4 4 4.5 0.5774|5 5 5"],
  ["", "Student 3", "5 5 5 5 5 0|5 5 5 5 5 0|5 5 5"],
  ["", "Student 4", "5 5 4 5 4.75 0.5|5 5 4 4 4.5 0.5774|5 5 5"],
  ["", "", ""],
  ["Group 4", "Student 1", "5 5 5 - 5 0|5 5 5 - 5 0|5 5 5"],
  ["", "Student 2", "5 5 5 - 5 0|5 5 5 - 5 0|5 5 5"],
  ["", "Student 3", "5 5 5 - 5 0|5 5 5 - 5 0|5 5 5"],
  ["", "", ""],
  ["", "", ""],
];

function DataRow({ index, row }: { index: number; row: [string, string, string] }) {
  let [a, b, data] = row;
  let parts = data ? data.split("|").map((p) => p.split(" ")) : [[], [], []];
  let block = (values: string[], count: number) =>
    Array.from({ length: count }, (_, i) => {
      let v = values[i] && values[i] !== "-" ? values[i] : "";
      return <Cell key={i} $num>{v}</Cell>;
    });
  return (
    <SheetRow>
      <RowHead>{index}</RowHead>
      <Cell>{a}</Cell>
      <Cell>{b}</Cell>
      {block(parts[0], 6)}
      <Cell />
      {block(parts[1], 6)}
      <Cell />
      {block(parts[2], 3)}
      <Cell />
    </SheetRow>
  );
}

function StudentHeads() {
  return (
    <>
      <Cell>Student 1</Cell>
      <Cell>Student 2</Cell>
      <Cell>Student 3</Cell>
      <Cell>Student 4</Cell>
    </>
  );
}

function Spreadsheet() {
  return (
    <Sheet>
      <HeaderRow>
        <Corner><CornerMark /></Corner>
        {COLS.map((c) => (
          <ColHead key={c} $active={c === "A"}>{c}</ColHead>
        ))}
      </HeaderRow>
      <SheetBody>
        <SheetRow>
          <RowHead $active>1</RowHead>
          <ActiveCell />
          <Cell />
          <Cell $span={3}>Assessment Criterion 1</Cell>
          <Cell /><Cell /><Cell /><Cell />
          <Cell $span={3}>Assessment Criterion 2</Cell>
          <Cell /><Cell /><Cell /><Cell />
          <Cell $span={3}>Assessment Criterion 3</Cell>
          <Cell />
        </SheetRow>
        <SheetRow>
          <RowHead>2</RowHead>
          <Cell>Group 1</Cell>
          <Cell />
          <StudentHeads />
          <Cell>Average</Cell>
          <Cell $span={2}>Standard Deviation</Cell>
          <StudentHeads />
          <Cell>Average</Cell>
          <Cell $span={2}>Standard Deviation</Cell>
          <StudentHeads />
        </SheetRow>
        {ROWS.map((row, i) => (
          <DataRow key={i} index={i + 3} row={row} />
        ))}
        <Highlight />
      </SheetBody>
    </Sheet>
  );
}

function LargeLabel({ top, bottom }: { top: string; bottom: string }) {
  return (
    <>
      <BigLine>{top}</BigLine>
      <BigLine>{bottom} <Chev /></BigLine>
    </>
  );
}

function TopBar() {
  return (
    <TitleBar>
      <AutoSave>AutoSave</AutoSave>
      <Toggle>Off</Toggle>
      <Slot $w={66}><SaveIcon /></Slot>
      <Slot $w={26}><UndoIcon /></Slot>
      <Slot $w={22}><Chev c="#6fa98a" /></Slot>
      <Slot $w={26} $ml={13}><UndoIcon flip /></Slot>
      <Slot $w={18}><Chev c="#6fa98a" /></Slot>
      <Slot $w={52}><CustomizeIcon /></Slot>
      <FileName>contributions summary.csv  -  Excel</FileName>
      <SearchBox><SearchGlass />Search</SearchBox>
      <WindowControls>
        <Slot $w={72}><RibbonDisplayIcon /></Slot>
        <Slot $w={72}><MinIcon /></Slot>
        <Slot $w={72}><RestoreIcon /></Slot>
        <Slot $w={72}><CloseIcon /></Slot>
      </WindowControls>
    </TitleBar>
  );
}

function RibbonPanel() {
  return (
    <Ribbon>
      <TabRow>
        <Tab $mr={5}>File</Tab>
        <Tab $active>Home</Tab>
        <Tab $mr={2}>Insert</Tab>
        <Tab $mr={2}>Page Layout</Tab>
        <Tab>Formulas</Tab>
        <Tab>Data</Tab>
        <Tab>Review</Tab>
        <Tab>View</Tab>
        <Tab>Help</Tab>
        <TabActions>
          <TabAction $w={104}><ShareIcon />Share</TabAction>
          <TabAction $w={154}><CommentIcon />Comments</TabAction>
        </TabActions>
      </TabRow>
      <Groups>
        <Group $w={147}>
          <GroupBody>
            <ClipColumn>
              <BigButton>
                <BigIcon><PasteIcon /></BigIcon>
                <BigLine>Paste</BigLine>
                <BigLine $drop><Chev /></BigLine>
              </BigButton>
            </ClipColumn>
            <ClipSide>
              <ToolRow $h={26}><Slot $w={34}><CutIcon /></Slot></ToolRow>
              <ToolRow $h={25}>
                <Slot $w={34}><CopyIcon /></Slot>
                <Slot $w={14}><Chev /></Slot>
              </ToolRow>
              <ToolRow $h={24}><Slot $w={34}><PainterIcon /></Slot></ToolRow>
            </ClipSide>
          </GroupBody>
          <GroupLabel><GroupName>Clipboard</GroupName><Launcher><LauncherIcon /></Launcher></GroupLabel>
        </Group>

        <Group $w={340}>
          <GroupBody>
            <Stack $pl={14}>
              <ToolRow>
                <Field $w={181}>Calibri<Chev c="#333" /></Field>
                <Field $w={67}>11<Chev c="#333" /></Field>
                <Slot $w={34}><FontStep up size={28} /></Slot>
                <Slot $w={36}><FontStep size={23} /></Slot>
              </ToolRow>
              <ToolRow>
                <Slot $w={32}><Glyph $bold $size={20}>B</Glyph></Slot>
                <Slot $w={34}><Glyph $italic $size={20}>I</Glyph></Slot>
                <Slot $w={32}><Glyph $under $size={20}>U</Glyph></Slot>
                <Slot $w={24}><Chev /></Slot>
                <Slot $w={12}><Divider $h={32} /></Slot>
                <Slot $w={29}><BorderIcon /></Slot>
                <Slot $w={28}><Chev /></Slot>
                <Slot $w={8}><Divider $h={32} /></Slot>
                <Slot $w={35}><FillIcon /></Slot>
                <Slot $w={18}><Chev /></Slot>
                <Slot $w={42}><ColorIcon /></Slot>
                <Slot $w={14}><Chev /></Slot>
              </ToolRow>
            </Stack>
          </GroupBody>
          <GroupLabel><GroupName>Font</GroupName><Launcher><LauncherIcon /></Launcher></GroupLabel>
        </Group>

        <Group $w={314}>
          <GroupBody>
            <Stack $pl={12} $w={237}>
              <ToolRow>
                <Slot $w={34}><LinesIcon lines={[[4, 1, 23], [10, 5, 19], [16, 1, 23]]} /></Slot>
                <Slot $w={33}><LinesIcon lines={[[6, 1, 23], [12, 5, 19], [18, 1, 23]]} /></Slot>
                <Pressed $w={34}><LinesIcon lines={[[8, 1, 23], [14, 5, 19], [20, 1, 23]]} /></Pressed>
                <Slot $w={34} $ml={3}><OrientationIcon /></Slot>
                <Slot $w={12}><Chev /></Slot>
                <Slot $w={32} $ml={11}><ParagraphIcon /></Slot>
                <Slot $w={16} $ml={4}><Chev /></Slot>
              </ToolRow>
              <ToolRow>
                <Slot $w={34}><LinesIcon lines={[[3, 1, 23], [9, 1, 17], [15, 1, 23], [21, 1, 17]]} /></Slot>
                <Slot $w={33}><LinesIcon lines={[[3, 1, 23], [9, 4, 20], [15, 1, 23], [21, 4, 20]]} /></Slot>
                <Slot $w={34}><LinesIcon lines={[[3, 1, 23], [9, 7, 23], [15, 1, 23], [21, 7, 23]]} /></Slot>
                <Slot $w={34} $ml={3}><IndentIcon out /></Slot>
                <Slot $w={33}><IndentIcon /></Slot>
              </ToolRow>
            </Stack>
            <InnerDivider />
            <Stack $pl={6}>
              <ToolRow><Slot $w={36}><WrapIcon /></Slot></ToolRow>
              <ToolRow>
                <Slot $w={32}><MergeIcon /></Slot>
                <Slot $w={24}><Chev /></Slot>
              </ToolRow>
            </Stack>
          </GroupBody>
          <GroupLabel><GroupName>Alignment</GroupName><Launcher><LauncherIcon /></Launcher></GroupLabel>
        </Group>

        <Group $w={225}>
          <GroupBody>
            <Stack $pl={14}>
              <ToolRow><Field $w={200} $font={UI} $size={17}>General<Chev c="#333" /></Field></ToolRow>
              <ToolRow>
                <Slot $w={34}><AccountingIcon /></Slot>
                <Slot $w={18}><Chev /></Slot>
                <Slot $w={42}><Glyph $size={31}>%</Glyph></Slot>
                <Slot $w={26}><CommaIcon /></Slot>
                <Slot $w={16}><Divider $h={32} /></Slot>
                <Slot $w={24}><DecimalIcon more /></Slot>
                <Slot $w={44}><DecimalIcon /></Slot>
              </ToolRow>
            </Stack>
          </GroupBody>
          <GroupLabel><GroupName>Number</GroupName><Launcher><LauncherIcon /></Launcher></GroupLabel>
        </Group>

        <Group $w={303}>
          <GroupBody>
            <Slot $w={14} />
            <BigButton $w={114}>
              <BigIcon><CondFormatIcon /></BigIcon>
              <LargeLabel top="Conditional" bottom="Formatting" />
            </BigButton>
            <BigButton $w={94}>
              <BigIcon><TableIcon /></BigIcon>
              <LargeLabel top="Format as" bottom="Table" />
            </BigButton>
            <BigButton $w={66}>
              <BigIcon><CellStyleIcon /></BigIcon>
              <LargeLabel top="Cell" bottom="Styles" />
            </BigButton>
          </GroupBody>
          <GroupLabel><GroupName>Styles</GroupName></GroupLabel>
        </Group>

        <Group $w={146}>
          <GroupBody>
            <SmallRows $pl={14}>
              <SmallRow>
                <Slot $w={30}><InsertIcon /></Slot>
                <SmallText $w={60}>Insert</SmallText>
                <Chev />
              </SmallRow>
              <SmallRow>
                <Slot $w={30}><DeleteIcon /></Slot>
                <SmallText $w={66}>Delete</SmallText>
                <Chev />
              </SmallRow>
              <SmallRow>
                <Slot $w={30}><FormatCellIcon /></Slot>
                <SmallText $w={64}>Format</SmallText>
                <Chev />
              </SmallRow>
            </SmallRows>
          </GroupBody>
          <GroupLabel><GroupName>Cells</GroupName></GroupLabel>
        </Group>

        <Group $w={220}>
          <GroupBody>
            <SmallRows $pl={12} $w={68}>
              <SmallRow>
                <Slot $w={34}><SigmaIcon /></Slot>
                <Slot $w={20}><Chev /></Slot>
              </SmallRow>
              <SmallRow>
                <Slot $w={34}><FillDownIcon /></Slot>
                <Slot $w={12}><Chev /></Slot>
              </SmallRow>
              <SmallRow>
                <Slot $w={34}><EraserIcon /></Slot>
                <Slot $w={12}><Chev /></Slot>
              </SmallRow>
            </SmallRows>
            <BigButton $w={70}>
              <BigIcon><SortIcon /></BigIcon>
              <LargeLabel top="Sort &" bottom="Filter" />
            </BigButton>
            <BigButton $w={68}>
              <BigIcon><FindIcon /></BigIcon>
              <LargeLabel top="Find &" bottom="Select" />
            </BigButton>
          </GroupBody>
          <GroupLabel><GroupName>Editing</GroupName></GroupLabel>
        </Group>

        <Group $w={90}>
          <GroupBody>
            <BigButton>
              <BigIcon><IdeasIcon /></BigIcon>
              <BigLine>Ideas</BigLine>
            </BigButton>
          </GroupBody>
          <GroupLabel><GroupName>Ideas</GroupName></GroupLabel>
        </Group>

        <Group $w={114}>
          <GroupBody>
            <BigButton $off>
              <BigIcon><SensitivityIcon /></BigIcon>
              <BigLine>Sensitivity</BigLine>
              <BigLine $drop><Chev c="#b3b0ad" /></BigLine>
            </BigButton>
          </GroupBody>
          <GroupLabel><GroupName>Sensitivity</GroupName></GroupLabel>
        </Group>

        <CollapseCell>
          <svg width="18" height="10" viewBox="0 0 18 10" fill="none" stroke="#444" strokeWidth="1.5">
            <path d="M1 9l8-8 8 8" />
          </svg>
        </CollapseCell>
      </Groups>
    </Ribbon>
  );
}

function FormulaBar() {
  return (
    <FormulaRow>
      <NameBox>A1<Triangle d="M3 5h8L7 9z" /></NameBox>
      <FormulaGrip $w={47}><DotsIcon /></FormulaGrip>
      <FormulaActions>
        <Slot $w={57}>
          <svg width="18" height="18" viewBox="0 0 18 18" stroke="#c8c6c4" strokeWidth="2.2">
            <path d="M2 2l14 14M16 2L2 16" />
          </svg>
        </Slot>
        <Slot $w={57}>
          <svg width="22" height="18" viewBox="0 0 22 18" fill="none" stroke="#c8c6c4" strokeWidth="3.5">
            <path d="M2 10l6 6L20 2" />
          </svg>
        </Slot>
        <Slot $w={54}><FxGlyph>fx</FxGlyph></Slot>
      </FormulaActions>
      <FormulaInput><Chev c="#444" /></FormulaInput>
    </FormulaRow>
  );
}

function SheetTabs() {
  return (
    <TabStrip>
      <SheetNav>
        <Slot $w={36}><Triangle d="M9 2v10L4 7z" c="#c8c8c8" /></Slot>
        <Slot $w={36}><Triangle d="M5 2v10l5-5z" c="#c8c8c8" /></Slot>
      </SheetNav>
      <SheetTab>contributions summary</SheetTab>
      <AddSheet $w={104}><PlusCircle /></AddSheet>
      <HScroll>
        <Slot $w={48}><DotsIcon /></Slot>
        <ScrollButton $w={24} $h={26}><Triangle d="M9 2v10L4 7z" /></ScrollButton>
        <HThumb />
        <HTrack />
        <ScrollButton $w={26} $h={26}><Triangle d="M5 2v10l5-5z" /></ScrollButton>
      </HScroll>
    </TabStrip>
  );
}

function StatusFooter() {
  return (
    <StatusBar>
      <ViewButton $active><NormalViewIcon /></ViewButton>
      <ViewButton><PageViewIcon /></ViewButton>
      <ViewButton><BreakViewIcon /></ViewButton>
      <ZoomSign $w={30}>
        <svg width="13" height="2" viewBox="0 0 13 2"><path d="M0 1h13" stroke="#605e5c" strokeWidth="1.5" /></svg>
      </ZoomSign>
      <ZoomSlider />
      <ZoomSign $w={28}>
        <svg width="14" height="14" viewBox="0 0 14 14"><path d="M0 7h14M7 0v14" stroke="#605e5c" strokeWidth="1.5" /></svg>
      </ZoomSign>
      <ZoomValue>100%</ZoomValue>
    </StatusBar>
  );
}

export default function App() {
  return (
    <>
      <GlobalStyle />
      <Page>
        <TopBar />
        <RibbonPanel />
        <FormulaBar />
        <SheetArea>
          <Spreadsheet />
          <VScroll>
            <ScrollButton><Triangle d="M2 9h10L7 4z" /></ScrollButton>
            <VThumb />
            <VTrack />
            <ScrollButton><Triangle d="M2 5h10L7 10z" /></ScrollButton>
          </VScroll>
        </SheetArea>
        <SheetTabs />
        <StatusFooter />
      </Page>
    </>
  );
}
